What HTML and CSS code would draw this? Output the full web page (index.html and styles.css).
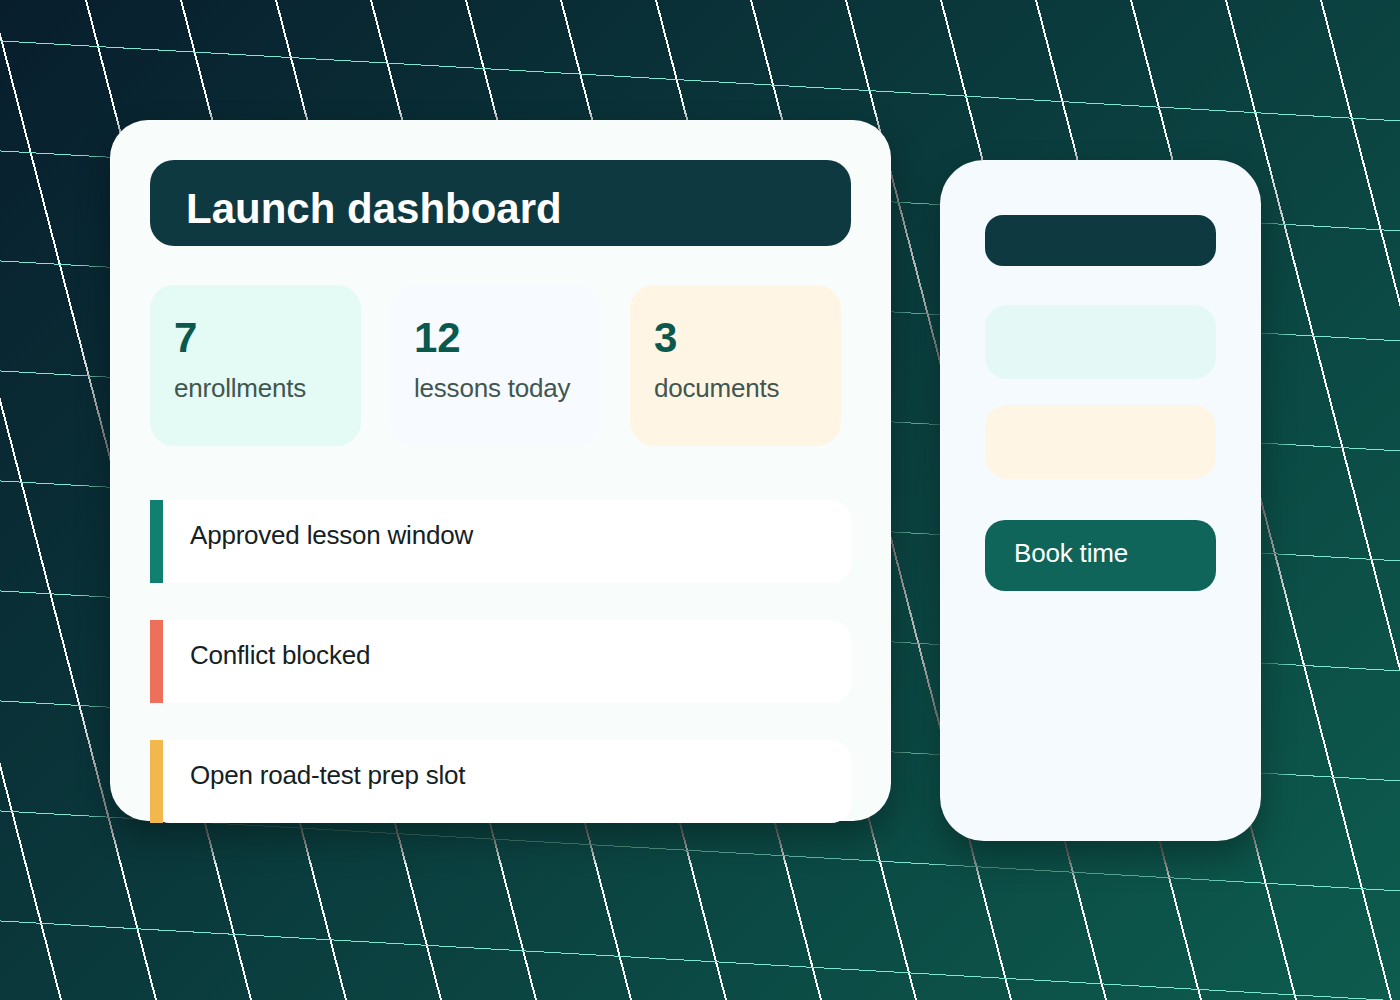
FILE: index.html
```html
<!DOCTYPE html>
<html lang="en">
<head>
<meta charset="utf-8">
<title>Launch dashboard</title>
<link rel="stylesheet" href="styles.css">
</head>
<body>
<div class="scene">
  <svg class="grid" width="1400" height="1000" viewBox="0 0 1400 1000" aria-hidden="true">
    <defs>
      <filter id="soften" x="0" y="0" width="1400" height="1000" filterUnits="userSpaceOnUse" color-interpolation-filters="sRGB">
        <feGaussianBlur stdDeviation="17"/>
        <feComponentTransfer>
          <feFuncA type="table" tableValues="0 .213 .351 .448 .519 .574 .618 .654 .684 .708 .73"/>
        </feComponentTransfer>
      </filter>
      <mask id="shade" maskUnits="userSpaceOnUse" x="0" y="0" width="1400" height="1000" style="mask-type:alpha">
        <g filter="url(#soften)">
          <rect x="110" y="136" width="781" height="701" rx="38"/>
          <rect x="940" y="176" width="321" height="681" rx="44"/>
        </g>
      </mask>
      <path id="steep" d="M-199 0l260 1000M-104 0l260 1000M-9 0l260 1000M86 0l260 1000M181 0l260 1000M276 0l260 1000M371 0l260 1000M466 0l260 1000M561 0l260 1000M656 0l260 1000M751 0l260 1000M846 0l260 1000M941 0l260 1000M1036 0l260 1000M1131 0l260 1000M1226 0l260 1000M1321 0l260 1000"/>
      <path id="shallow" d="M0 40.95l1400 80M0 150.95l1400 80M0 260.95l1400 80M0 370.95l1400 80M0 480.95l1400 80M0 590.95l1400 80M0 700.95l1400 80M0 810.95l1400 80M0 920.95l1400 80"/>
    </defs>
    <use href="#steep" class="steep"/>
    <use href="#shallow" class="shallow"/>
    <g mask="url(#shade)">
      <use href="#steep" class="steep dim"/>
      <use href="#shallow" class="shallow dim"/>
    </g>
  </svg>
  <main class="panels">
    <section class="board">
      <h1 class="title">Launch dashboard</h1>
      <div class="stats">
        <div class="stat mint"><strong class="value">7</strong><span class="label">enrollments</span></div>
        <div class="stat ice"><strong class="value">12</strong><span class="label">lessons today</span></div>
        <div class="stat cream"><strong class="value">3</strong><span class="label">documents</span></div>
      </div>
      <ul class="events">
        <li class="event"><span class="accent green"></span><span class="text">Approved lesson window</span></li>
        <li class="event"><span class="accent coral"></span><span class="text">Conflict blocked</span></li>
        <li class="event"><span class="accent amber"></span><span class="text">Open road-test prep slot</span></li>
      </ul>
    </section>
    <aside class="phone">
      <div class="bar"></div>
      <div class="tile aqua"></div>
      <div class="tile cream"></div>
      <button class="book">Book time</button>
    </aside>
  </main>
</div>
</body>
</html>
```
FILE: styles.css
```css
* { box-sizing: border-box; }
body { margin: 0; font-family: "Liberation Sans", Arial, sans-serif; }
.scene {
  position: relative;
  width: 1400px;
  height: 1000px;
  overflow: hidden;
  background: linear-gradient(135deg, #081e2d, #0d5c4e);
}
.grid { position: absolute; inset: 0; }
.steep, .shallow { fill: none; shape-rendering: crispEdges; }
.steep { stroke: #fff; stroke-width: 1.95; }
.shallow { stroke: #7de8d2; stroke-width: 1; }
.steep.dim, .shallow.dim { stroke: #000; }
.panels {
  position: relative;
  display: flex;
  align-items: flex-start;
  gap: 49px;
  padding: 120px 0 0 110px;
}
.board, .phone { box-shadow: 0 16px 34px rgba(0, 0, 0, .3); }
.board {
  width: 781px;
  height: 701px;
  padding: 40px;
  border-radius: 38px;
  background: #f8fdfb;
}
.title {
  height: 86px;
  margin: 0 0 39px;
  padding: 25px 0 0 36px;
  border-radius: 24px;
  background: #0e3940;
  color: #fff;
  font-size: 42px;
  line-height: 48px;
}
.stats { display: flex; gap: 29px; }
.stat {
  display: flex;
  flex-direction: column;
  gap: 11px;
  width: 211px;
  height: 161px;
  padding: 29px 0 0 24px;
  border-radius: 24px;
}
.mint { background: #e4faf4; }
.ice { background: #f7faff; }
.cream { background: #fff5e5; }
.aqua { background: #e4f8f5; }
.value { color: #0b584d; font-size: 42px; line-height: 48px; }
.label { color: #40564f; font-size: 26px; line-height: 30px; letter-spacing: -.21px; }
.events {
  display: flex;
  flex-direction: column;
  gap: 37px;
  margin: 54px 0 0;
  padding: 0;
  list-style: none;
}
.event {
  display: flex;
  gap: 27px;
  height: 83px;
  border-radius: 20px;
  background: #fff;
}
.accent { width: 13px; }
.green { background: #118070; }
.coral { background: #ee705a; }
.amber { background: #f2b84d; }
.text { padding-top: 20px; color: #14211f; font-size: 26px; line-height: 30px; letter-spacing: -.21px; }
.phone {
  width: 321px;
  height: 681px;
  margin-top: 40px;
  padding: 55px 45px;
  border-radius: 44px;
  background: #f5faff;
}
.bar { height: 51px; margin-bottom: 39px; border-radius: 18px; background: #0e3940; }
.tile { height: 74px; margin-bottom: 26px; border-radius: 22px; }
.book {
  display: block;
  width: 100%;
  height: 71px;
  margin-top: 41px;
  padding: 0 0 5px 29px;
  border: 0;
  border-radius: 20px;
  background: #0f655a;
  color: #fff;
  font: 26px/30px "Liberation Sans", Arial, sans-serif;
  letter-spacing: -.18px;
  text-align: left;
}
```
